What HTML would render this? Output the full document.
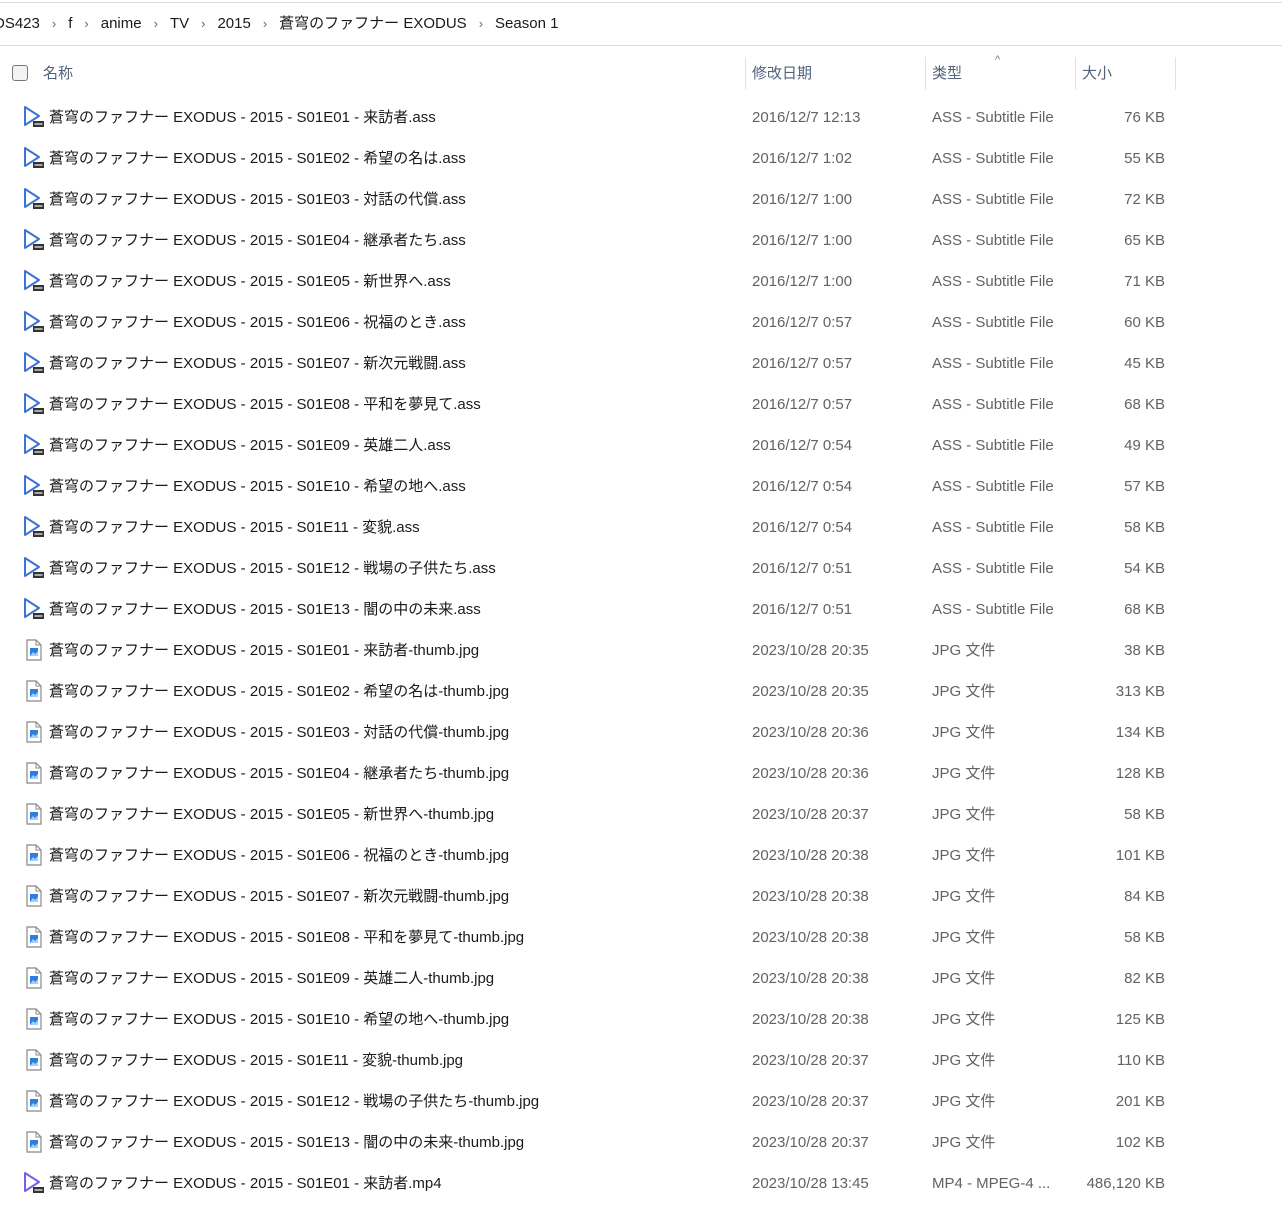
<!DOCTYPE html>
<html><head><meta charset="utf-8"><style>
*{margin:0;padding:0;box-sizing:border-box}
body{width:1282px;height:1207px;background:#fff;position:relative;overflow:hidden;font-family:"Liberation Sans","Noto Sans CJK JP",sans-serif;font-size:15px;color:#1a1a1a}
.hl{position:absolute;left:0;width:1282px;height:2px;background:#dcdcdc}
.bc{position:absolute;top:14px;left:-6px;white-space:nowrap;font-size:15px;line-height:20px;color:#1a1a1a}
.bc span.s{color:#666;font-size:13px;margin:0 12px}
.hd{position:absolute;top:64px;font-size:15px;line-height:20px;color:#51637a}
.vd{position:absolute;top:57px;width:1px;height:33px;background:#e2e2e2}
.r{position:absolute;left:0;width:1282px;height:41px}
.r span{line-height:20px;height:20px;display:block;position:absolute;top:12px;white-space:nowrap}
.r .n{left:49px}
.r .d{left:752px;color:#5f6368}
.r .t{left:932px;color:#5f6368}
.r .z{right:117px;color:#5f6368}
.r svg{position:absolute;left:22px;top:9px}
</style></head><body>
<div class="hl" style="top:2px;height:1px"></div>
<div class="bc">DS423<span class="s">›</span>f<span class="s">›</span>anime<span class="s">›</span>TV<span class="s">›</span>2015<span class="s">›</span>蒼穹のファフナー EXODUS<span class="s">›</span>Season 1</div>
<div class="hl" style="top:45px;height:1px"></div>
<div style="position:absolute;left:12px;top:65px;width:16px;height:16px;border:1px solid #777;border-radius:3px;background:#f3f3f3"></div>
<div class="hd" style="left:43px">名称</div>
<div class="vd" style="left:745px"></div>
<div class="hd" style="left:752px">修改日期</div>
<div class="vd" style="left:925px"></div>
<div class="hd" style="left:932px">类型</div>
<div style="position:absolute;left:995px;top:54px;font-size:11px;color:#777">^</div>
<div class="vd" style="left:1075px"></div>
<div class="hd" style="left:1082px">大小</div>
<div class="vd" style="left:1175px"></div>

<svg width="0" height="0" style="position:absolute"><defs>
<symbol id="pl" viewBox="0 0 24 24"><path d="M3 2 L3 20 L17 11 Z" fill="none" stroke="#3b73d9" stroke-width="2" stroke-linejoin="round"/><rect x="11" y="16" width="11" height="6" fill="#333"/><rect x="12.5" y="18" width="8" height="2" fill="#aaa"/></symbol>
<symbol id="pm" viewBox="0 0 24 24"><path d="M3 2 L3 20 L17 11 Z" fill="none" stroke="#7a5cf0" stroke-width="2" stroke-linejoin="round"/><rect x="11" y="16" width="11" height="6" fill="#333"/><rect x="12.5" y="18" width="8" height="2" fill="#aaa"/></symbol>
<symbol id="jp" viewBox="0 0 24 24"><path d="M5 2 H14 L19 7 V22 H5 Z" fill="#fff" stroke="#888" stroke-width="1.2"/><path d="M14 2 V7 H19" fill="none" stroke="#888" stroke-width="1"/><rect x="8" y="10" width="8" height="8" fill="#2f7de0"/><path d="M8 18 L11 14 L13 16 L16 13 V18 Z" fill="#9fd0ff"/></symbol>
</defs></svg>

<div class="r" style="top:96px"><svg width="24" height="24"><use href="#pl"/></svg><span class="n">蒼穹のファフナー EXODUS - 2015 - S01E01 - 来訪者.ass</span><span class="d">2016/12/7 12:13</span><span class="t">ASS - Subtitle File</span><span class="z">76 KB</span></div>
<div class="r" style="top:137px"><svg width="24" height="24"><use href="#pl"/></svg><span class="n">蒼穹のファフナー EXODUS - 2015 - S01E02 - 希望の名は.ass</span><span class="d">2016/12/7 1:02</span><span class="t">ASS - Subtitle File</span><span class="z">55 KB</span></div>
<div class="r" style="top:178px"><svg width="24" height="24"><use href="#pl"/></svg><span class="n">蒼穹のファフナー EXODUS - 2015 - S01E03 - 対話の代償.ass</span><span class="d">2016/12/7 1:00</span><span class="t">ASS - Subtitle File</span><span class="z">72 KB</span></div>
<div class="r" style="top:219px"><svg width="24" height="24"><use href="#pl"/></svg><span class="n">蒼穹のファフナー EXODUS - 2015 - S01E04 - 継承者たち.ass</span><span class="d">2016/12/7 1:00</span><span class="t">ASS - Subtitle File</span><span class="z">65 KB</span></div>
<div class="r" style="top:260px"><svg width="24" height="24"><use href="#pl"/></svg><span class="n">蒼穹のファフナー EXODUS - 2015 - S01E05 - 新世界へ.ass</span><span class="d">2016/12/7 1:00</span><span class="t">ASS - Subtitle File</span><span class="z">71 KB</span></div>
<div class="r" style="top:301px"><svg width="24" height="24"><use href="#pl"/></svg><span class="n">蒼穹のファフナー EXODUS - 2015 - S01E06 - 祝福のとき.ass</span><span class="d">2016/12/7 0:57</span><span class="t">ASS - Subtitle File</span><span class="z">60 KB</span></div>
<div class="r" style="top:342px"><svg width="24" height="24"><use href="#pl"/></svg><span class="n">蒼穹のファフナー EXODUS - 2015 - S01E07 - 新次元戦闘.ass</span><span class="d">2016/12/7 0:57</span><span class="t">ASS - Subtitle File</span><span class="z">45 KB</span></div>
<div class="r" style="top:383px"><svg width="24" height="24"><use href="#pl"/></svg><span class="n">蒼穹のファフナー EXODUS - 2015 - S01E08 - 平和を夢見て.ass</span><span class="d">2016/12/7 0:57</span><span class="t">ASS - Subtitle File</span><span class="z">68 KB</span></div>
<div class="r" style="top:424px"><svg width="24" height="24"><use href="#pl"/></svg><span class="n">蒼穹のファフナー EXODUS - 2015 - S01E09 - 英雄二人.ass</span><span class="d">2016/12/7 0:54</span><span class="t">ASS - Subtitle File</span><span class="z">49 KB</span></div>
<div class="r" style="top:465px"><svg width="24" height="24"><use href="#pl"/></svg><span class="n">蒼穹のファフナー EXODUS - 2015 - S01E10 - 希望の地へ.ass</span><span class="d">2016/12/7 0:54</span><span class="t">ASS - Subtitle File</span><span class="z">57 KB</span></div>
<div class="r" style="top:506px"><svg width="24" height="24"><use href="#pl"/></svg><span class="n">蒼穹のファフナー EXODUS - 2015 - S01E11 - 変貌.ass</span><span class="d">2016/12/7 0:54</span><span class="t">ASS - Subtitle File</span><span class="z">58 KB</span></div>
<div class="r" style="top:547px"><svg width="24" height="24"><use href="#pl"/></svg><span class="n">蒼穹のファフナー EXODUS - 2015 - S01E12 - 戦場の子供たち.ass</span><span class="d">2016/12/7 0:51</span><span class="t">ASS - Subtitle File</span><span class="z">54 KB</span></div>
<div class="r" style="top:588px"><svg width="24" height="24"><use href="#pl"/></svg><span class="n">蒼穹のファフナー EXODUS - 2015 - S01E13 - 闇の中の未来.ass</span><span class="d">2016/12/7 0:51</span><span class="t">ASS - Subtitle File</span><span class="z">68 KB</span></div>
<div class="r" style="top:629px"><svg width="24" height="24"><use href="#jp"/></svg><span class="n">蒼穹のファフナー EXODUS - 2015 - S01E01 - 来訪者-thumb.jpg</span><span class="d">2023/10/28 20:35</span><span class="t">JPG 文件</span><span class="z">38 KB</span></div>
<div class="r" style="top:670px"><svg width="24" height="24"><use href="#jp"/></svg><span class="n">蒼穹のファフナー EXODUS - 2015 - S01E02 - 希望の名は-thumb.jpg</span><span class="d">2023/10/28 20:35</span><span class="t">JPG 文件</span><span class="z">313 KB</span></div>
<div class="r" style="top:711px"><svg width="24" height="24"><use href="#jp"/></svg><span class="n">蒼穹のファフナー EXODUS - 2015 - S01E03 - 対話の代償-thumb.jpg</span><span class="d">2023/10/28 20:36</span><span class="t">JPG 文件</span><span class="z">134 KB</span></div>
<div class="r" style="top:752px"><svg width="24" height="24"><use href="#jp"/></svg><span class="n">蒼穹のファフナー EXODUS - 2015 - S01E04 - 継承者たち-thumb.jpg</span><span class="d">2023/10/28 20:36</span><span class="t">JPG 文件</span><span class="z">128 KB</span></div>
<div class="r" style="top:793px"><svg width="24" height="24"><use href="#jp"/></svg><span class="n">蒼穹のファフナー EXODUS - 2015 - S01E05 - 新世界へ-thumb.jpg</span><span class="d">2023/10/28 20:37</span><span class="t">JPG 文件</span><span class="z">58 KB</span></div>
<div class="r" style="top:834px"><svg width="24" height="24"><use href="#jp"/></svg><span class="n">蒼穹のファフナー EXODUS - 2015 - S01E06 - 祝福のとき-thumb.jpg</span><span class="d">2023/10/28 20:38</span><span class="t">JPG 文件</span><span class="z">101 KB</span></div>
<div class="r" style="top:875px"><svg width="24" height="24"><use href="#jp"/></svg><span class="n">蒼穹のファフナー EXODUS - 2015 - S01E07 - 新次元戦闘-thumb.jpg</span><span class="d">2023/10/28 20:38</span><span class="t">JPG 文件</span><span class="z">84 KB</span></div>
<div class="r" style="top:916px"><svg width="24" height="24"><use href="#jp"/></svg><span class="n">蒼穹のファフナー EXODUS - 2015 - S01E08 - 平和を夢見て-thumb.jpg</span><span class="d">2023/10/28 20:38</span><span class="t">JPG 文件</span><span class="z">58 KB</span></div>
<div class="r" style="top:957px"><svg width="24" height="24"><use href="#jp"/></svg><span class="n">蒼穹のファフナー EXODUS - 2015 - S01E09 - 英雄二人-thumb.jpg</span><span class="d">2023/10/28 20:38</span><span class="t">JPG 文件</span><span class="z">82 KB</span></div>
<div class="r" style="top:998px"><svg width="24" height="24"><use href="#jp"/></svg><span class="n">蒼穹のファフナー EXODUS - 2015 - S01E10 - 希望の地へ-thumb.jpg</span><span class="d">2023/10/28 20:38</span><span class="t">JPG 文件</span><span class="z">125 KB</span></div>
<div class="r" style="top:1039px"><svg width="24" height="24"><use href="#jp"/></svg><span class="n">蒼穹のファフナー EXODUS - 2015 - S01E11 - 変貌-thumb.jpg</span><span class="d">2023/10/28 20:37</span><span class="t">JPG 文件</span><span class="z">110 KB</span></div>
<div class="r" style="top:1080px"><svg width="24" height="24"><use href="#jp"/></svg><span class="n">蒼穹のファフナー EXODUS - 2015 - S01E12 - 戦場の子供たち-thumb.jpg</span><span class="d">2023/10/28 20:37</span><span class="t">JPG 文件</span><span class="z">201 KB</span></div>
<div class="r" style="top:1121px"><svg width="24" height="24"><use href="#jp"/></svg><span class="n">蒼穹のファフナー EXODUS - 2015 - S01E13 - 闇の中の未来-thumb.jpg</span><span class="d">2023/10/28 20:37</span><span class="t">JPG 文件</span><span class="z">102 KB</span></div>
<div class="r" style="top:1162px"><svg width="24" height="24"><use href="#pm"/></svg><span class="n">蒼穹のファフナー EXODUS - 2015 - S01E01 - 来訪者.mp4</span><span class="d">2023/10/28 13:45</span><span class="t">MP4 - MPEG-4 ...</span><span class="z">486,120 KB</span></div>
</body></html>
